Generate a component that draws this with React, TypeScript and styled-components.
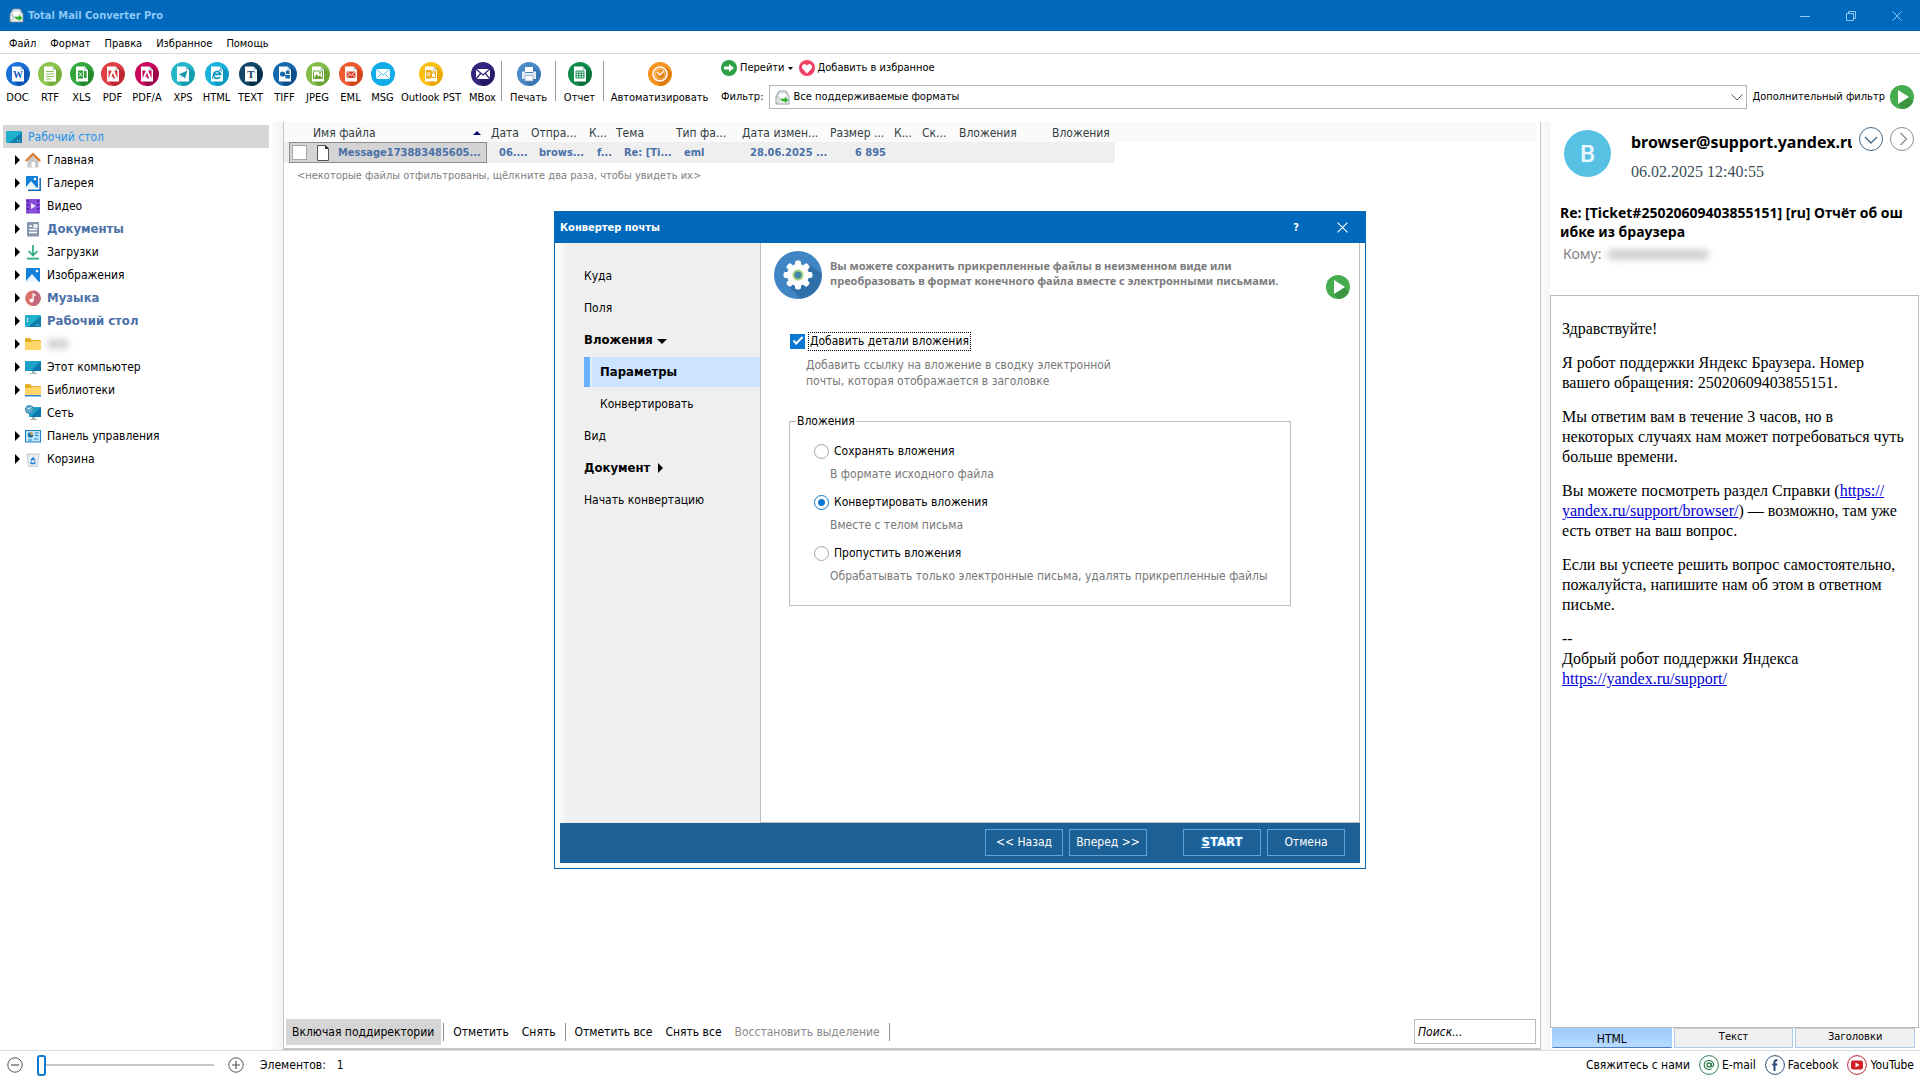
import React, { useState } from "react";
import styled, { createGlobalStyle, css } from "styled-components";

const ui = `"DejaVu Sans Condensed", "Noto Sans", sans-serif`;
const humanist = `"Noto Sans", "Open Sans", sans-serif`;
const serif = `"Liberation Serif", "Times New Roman", serif`;

const GlobalStyle = createGlobalStyle`
  *, *::before, *::after { box-sizing: border-box; }
  body { margin: 0; background: #fff; }
  button, input, select { font: inherit; color: inherit; margin: 0; }
  button { background: none; border: 0; padding: 0; }
`;

const Window = styled.div`
  display: flex;
  flex-direction: column;
  height: 100vh;
  overflow: hidden;
  font: 11px/16px ${ui};
  color: #000;
  background: #fff;
`;

/* ---------- title bar and menu ---------- */

const TitleBar = styled.header`
  display: flex;
  align-items: center;
  gap: 4px;
  flex: none;
  height: 31px;
  padding-left: 9px;
  background: #0069bb;
  color: #8cc8f8;
  font-weight: bold;
`;

const WindowButtons = styled.div`
  display: flex;
  margin-left: auto;
`;

const WindowButton = styled.button`
  display: grid;
  place-items: center;
  width: 46px;
  height: 31px;
`;

const MenuBar = styled.nav`
  display: flex;
  align-items: center;
  flex: none;
  gap: 14px;
  height: 23px;
  padding: 3px 0 0 9px;
  border-bottom: 1px solid #d9d9d9;
`;

/* ---------- toolbar ---------- */

const Toolbar = styled.div`
  display: flex;
  flex: none;
  height: 68px;
  padding-left: 1px;
`;

const ToolButton = styled.button<{ $width: number }>`
  display: flex;
  flex-direction: column;
  align-items: center;
  gap: 4px;
  flex: none;
  width: ${(p) => p.$width}px;
  padding-top: 8px;
  white-space: nowrap;
`;

const ToolSeparator = styled.span`
  flex: none;
  width: 1px;
  height: 40px;
  margin-top: 7px;
  background: #9a9a9a;
`;

const ToolColumn = styled.div`
  display: flex;
  flex-direction: column;
  flex: 1;
  gap: 7px;
  padding: 3px 6px 0;
`;

const ToolLine = styled.div<{ $gap: number }>`
  display: flex;
  align-items: center;
  gap: ${(p) => p.$gap}px;
  height: 22px;
`;

const LinkButton = styled.button`
  display: flex;
  align-items: center;
  gap: 3px;
  white-space: nowrap;
`;

const ComboBox = styled.div`
  display: flex;
  align-items: center;
  flex: 1;
  gap: 4px;
  height: 24px;
  padding: 0 3px 0 5px;
  border: 1px solid #b5b5b5;
`;

const BareSelect = styled.select`
  flex: 1;
  appearance: none;
  border: 0;
  background: none;
  padding: 0;
  outline: 0;
`;

/* ---------- folder tree ---------- */

const Main = styled.main`
  display: flex;
  flex: 1;
  min-height: 0;
`;

const Tree = styled.nav`
  flex: none;
  width: 272px;
  padding: 3px 3px 0;
  font-size: 12px;
`;

const TreeRow = styled.button<{ $root?: boolean; $bold?: boolean }>`
  display: flex;
  align-items: center;
  gap: 6px;
  width: 100%;
  height: 23px;
  padding-left: ${(p) => (p.$root ? 3 : 12)}px;
  white-space: nowrap;
  ${(p) => p.$root && css`background: #d6d6d6; color: #2492ee; border-radius: 1px;`}
  ${(p) => p.$bold && css`color: #4a70a8; font-size: 13px; font-weight: bold;`}
`;

const Caret = styled.span<{ $hidden?: boolean }>`
  width: 5px;
  border: 5px solid transparent;
  border-left-color: #000;
  border-right: 0;
  margin-right: -1px;
  visibility: ${(p) => (p.$hidden ? "hidden" : "visible")};
`;

const BlurredWord = styled.span<{ $width: number; $height: number }>`
  width: ${(p) => p.$width}px;
  height: ${(p) => p.$height}px;
  border-radius: 6px;
  background: #d2d2d2;
  filter: blur(3px);
`;

const Gutter = styled.div<{ $width: number }>`
  flex: none;
  width: ${(p) => p.$width}px;
  background: linear-gradient(90deg, #fafafa, #f4f4f4);
`;

/* ---------- file list ---------- */

const FilesPanel = styled.section`
  display: flex;
  flex-direction: column;
  flex: 1;
  min-width: 0;
  border: 1px solid #c4c4c4;
  border-top: 0;
  border-bottom-width: 2px;
`;

const HeaderStrip = styled.div`
  margin-right: 4px;
  background: linear-gradient(#fafafa, #fafafa) top / 100% 20px no-repeat;
`;

const FileTable = styled.table`
  table-layout: fixed;
  width: 831px;
  border-collapse: collapse;
  font-size: 12px;
  th {
    height: 20px;
    padding: 2px 0 0 4px;
    font-weight: normal;
    text-align: left;
    color: #333d42;
    white-space: nowrap;
  }
  td {
    height: 20px;
    padding: 0 0 0 12px;
    background: #efefef;
    color: #4a70a8;
    font-size: 11px;
    font-weight: bold;
    white-space: nowrap;
  }
  th:first-child { padding-left: 29px; }
  td:first-child { padding: 0 0 0 5px; }
`;

const NameHeader = styled.span`
  display: flex;
  align-items: center;
  justify-content: space-between;
  padding-right: 6px;
`;

const SortMark = styled.span`
  border: 4px solid transparent;
  border-bottom-color: #0b0b80;
  border-top: 0;
`;

const NameCell = styled.span`
  display: flex;
  align-items: center;
  height: 21px;
  padding-left: 2px;
  border: 1px solid #8b8b8b;
  background: #d4d4d4;
  svg { margin: 0 9px 0 10px; }
`;

const RowCheck = styled.input`
  appearance: none;
  flex: none;
  width: 15px;
  height: 15px;
  border: 1px solid #a5a5a5;
  background: #fff;
`;

const SizeCell = styled.td`
  && { padding: 0 4px 0 0; text-align: right; }
`;

const FilterNote = styled.p`
  margin: 0;
  padding: 5px 0 0 13px;
  color: #808080;
`;

const FilesFooter = styled.div`
  display: flex;
  align-items: center;
  margin-top: auto;
  height: 30px;
  padding: 0 4px 3px 2px;
  font-size: 12px;
`;

const FootButton = styled.button<{ $pressed?: boolean }>`
  height: 26px;
  padding: 0 7px 0 6px;
  white-space: nowrap;
  background: ${(p) => (p.$pressed ? "#d5d5d5" : "none")};
  &:disabled { color: #8a8a8a; }
`;

const FootSeparator = styled.span`
  width: 1px;
  height: 18px;
  margin: 0 3px 0 2px;
  background: #8e8e8e;
`;

const SearchInput = styled.input`
  width: 122px;
  height: 25px;
  margin-left: auto;
  padding: 0 3px;
  border: 1px solid #b9b9b9;
  outline: 0;
  font-size: 12px;
  font-style: italic;
  &::placeholder { color: #000; opacity: 1; }
`;

/* ---------- message preview ---------- */

const Preview = styled.aside`
  display: flex;
  flex-direction: column;
  flex: none;
  width: 370px;
  padding: 0 1px 2px 0;
`;

const Sender = styled.div`
  display: flex;
  align-items: flex-start;
  height: 76px;
  padding: 5px 5px 0 14px;
`;

const Avatar = styled.div`
  display: grid;
  place-items: center;
  flex: none;
  width: 47px;
  height: 47px;
  margin-top: 3px;
  border-radius: 50%;
  background: #57c1e4;
  color: #e9f8fd;
  font: 500 24px/46px Roboto, "Noto Sans", sans-serif;
`;

const SenderText = styled.div`
  flex: 1;
  min-width: 0;
  margin: 3px 7px 0 20px;
  overflow: hidden;
  white-space: nowrap;
`;

const Email = styled.div`
  font: bold 16px/24px ${humanist};
`;

const Stamp = styled.div`
  margin-top: 7px;
  font: 16px/22px ${serif};
  color: #3c4f58;
`;

const RoundButtons = styled.div`
  display: flex;
  gap: 7px;
`;

const Subject = styled.h2`
  margin: 0;
  padding: 5px 0 0 10px;
  font: bold 14px/19px ${humanist};
  white-space: nowrap;
`;

const Recipient = styled.div`
  display: flex;
  align-items: center;
  gap: 6px;
  height: 26px;
  padding-left: 13px;
  font: 14px/20px ${humanist};
  color: #848484;
`;

const Letter = styled.article`
  flex: 1;
  margin-top: 28px;
  padding: 23px 12px 0 11px;
  border: 1px solid #bcbcbc;
  font: 16px/20px ${serif};
  p { margin: 0 0 14px; }
  a { color: #0000d8; }
`;

const Tabs = styled.div`
  display: flex;
  gap: 2px;
  padding: 0 4px 0 2px;
`;

const Tab = styled.button<{ $active?: boolean }>`
  flex: 1;
  height: 20px;
  padding-bottom: 2px;
  border: 1px solid #aacdf0;
  border-top-color: #c9c9c9;
  background: #f0f0f0;
  ${(p) => p.$active && css`
    background: linear-gradient(#9fcbff, #b9dbff);
    border-color: #a8cffb;
    border-bottom-color: #4a7fc4;
    font-size: 12px;
    padding: 2px 0 0;
  `}
`;

/* ---------- status bar ---------- */

const StatusBar = styled.footer`
  display: flex;
  align-items: center;
  flex: none;
  height: 30px;
  padding: 0 6px 1px 7px;
  border-top: 1px solid #d5dde5;
  font-size: 12px;
`;

const Zoom = styled.div`
  display: flex;
  align-items: center;
  gap: 14px;
  margin-right: 16px;
`;

const ZoomRange = styled.input`
  appearance: none;
  width: 177px;
  height: 22px;
  background: linear-gradient(#c6c6c6, #c6c6c6) center / 100% 2px no-repeat;
  &::-webkit-slider-thumb {
    appearance: none;
    width: 9px;
    height: 21px;
    border: 2px solid #0a7ad1;
    border-radius: 3px;
    background: #fff;
  }
`;

const ZoomButton = styled.button`
  display: flex;
`;

const Count = styled.span`
  margin-left: 11px;
`;

const Contacts = styled.div`
  display: flex;
  align-items: center;
  gap: 9px;
  margin-left: auto;
`;

const Social = styled.a`
  display: flex;
  align-items: center;
  gap: 3px;
  color: #000;
  text-decoration: none;
`;

/* ---------- converter dialog ---------- */

const Overlay = styled.div`
  position: fixed;
  inset: 0;
  display: grid;
  place-items: center;
`;

const Dialog = styled.section`
  display: flex;
  flex-direction: column;
  width: 812px;
  height: 658px;
  border: 1px solid #0a69b4;
  background: #fff;
`;

const DialogTitle = styled.header`
  display: flex;
  align-items: center;
  flex: none;
  height: 31px;
  padding-left: 5px;
  background: #0069bb;
  color: #fff;
  font-weight: bold;
`;

const DialogFrame = styled.div`
  display: flex;
  flex-direction: column;
  flex: 1;
  margin: 0 5px 5px;
`;

const DialogMain = styled.div`
  display: flex;
  flex: 1;
`;

const Steps = styled.nav`
  display: flex;
  flex-direction: column;
  width: 200px;
  padding: 17px 0 0 24px;
  background: linear-gradient(90deg, #fafafa, #efefef 8px);
  font-size: 12px;
`;

const Step = styled.button<{ $bold?: boolean; $child?: boolean; $active?: boolean }>`
  display: flex;
  align-items: center;
  gap: 4px;
  height: 30px;
  margin: 1px 0;
  padding-left: ${(p) => (p.$child ? 16 : 0)}px;
  ${(p) => p.$bold && css`font-size: 13px; font-weight: bold;`}
  ${(p) => p.$active && css`
    background: linear-gradient(90deg, #6ab2fb 6px, #e2effc 6px, #e2effc 8px, #cce4ff 8px);
  `}
`;

const Arrow = styled.span<{ $down?: boolean }>`
  border: 5px solid transparent;
  ${(p) =>
    p.$down
      ? css`border-top-color: #000; border-bottom: 0; margin-top: 3px;`
      : css`border-left-color: #000; border-right: 0; margin-left: 4px;`}
`;

const StepPage = styled.div`
  flex: 1;
  padding: 8px 9px 0 13px;
  border: 1px solid #bdbdbd;
  border-top: 0;
  font-size: 12px;
`;

const Intro = styled.div`
  display: flex;
  align-items: flex-start;
  gap: 8px;
  p {
    flex: 1;
    margin: 7px 0 0;
    color: #7d7d7d;
    font: bold 11px/15px ${humanist};
    white-space: nowrap;
  }
  button { margin-top: 24px; }
`;

const Options = styled.div`
  padding: 29px 59px 0 16px;
`;

const CheckLabel = styled.label`
  display: flex;
  align-items: center;
  gap: 4px;
  width: max-content;
  height: 18px;
  margin-bottom: 7px;
  span { height: 17px; padding: 0 1px; outline: 1px dotted #000; }
`;

const CheckInput = styled.input`
  appearance: none;
  width: 15px;
  height: 15px;
  background: #0a78d0;
  display: grid;
  place-items: center;
  &::after {
    content: "";
    width: 10px;
    height: 5px;
    margin-top: -3px;
    border: solid #fff;
    border-width: 0 0 2px 2px;
    rotate: -45deg;
    visibility: hidden;
  }
  &:checked::after { visibility: visible; }
`;

const Hint = styled.p`
  margin: 0;
  padding-left: 16px;
  color: #777;
`;

const Group = styled.fieldset`
  height: 193px;
  min-width: 0;
  margin: 24px 0 0 -1px;
  padding: 14px 0 0 24px;
  border: 1px solid #bdbdbd;
  white-space: nowrap;
  legend { margin-left: -18px; padding: 0 1px; }
`;

const RadioLabel = styled.label`
  display: flex;
  align-items: center;
  gap: 5px;
  height: 16px;
`;

const RadioInput = styled.input`
  appearance: none;
  width: 15px;
  height: 15px;
  border: 1px solid #a3a3a3;
  border-radius: 50%;
  background: #fff;
  &:checked {
    border-color: #0a78d0;
    background: radial-gradient(#0a78d0 3px, #fff 4px);
  }
`;

const RadioItem = styled.div`
  height: 51px;
  p { margin-top: 7px; }
`;

const DialogFooter = styled.footer`
  display: flex;
  align-items: center;
  justify-content: flex-end;
  gap: 6px;
  height: 40px;
  padding: 0 15px 2px 0;
  background: #1d6096;
  color: #fff;
  font-size: 12px;
`;

const FooterButton = styled.button<{ $start?: boolean }>`
  width: 78px;
  height: 27px;
  border: 1px solid #5fa4dd;
  white-space: nowrap;
  ${(p) => p.$start && css`
    margin-left: 30px;
    font-size: 13px;
    font-weight: bold;
    text-shadow: 0 0 3px #2a9bff;
    &::first-letter { text-decoration: underline; }
  `}
`;

/* ---------- icons ---------- */

const Disc = ({ fill, shade, children }: { fill: string; shade?: string; children?: React.ReactNode }) => (
  <svg width="24" height="24" viewBox="0 0 24 24">
    <circle cx="12" cy="12" r="12" fill={fill} />
    {shade && <path d="M17 5 L23.2 9.5 A12 12 0 0 1 12 24 L8 19 Z" fill={shade} />}
    {children}
  </svg>
);

const Sheet = ({ children }: { children?: React.ReactNode }) => (
  <>
    <path d="M6 4.5h8.5L18 8v11.5H6z" fill="#fff" />
    <path d="M14.5 4.5V8H18z" fill="#b9cfdc" />
    {children}
  </>
);

const AdobeMark = ({ color }: { color: string }) => (
  <path d="M7.500 16.500V8.500h3.200zM16.500 16.500V8.500h-3.200zM12 11l2.300 5.500h-1.700l-.7-1.700h-1.600z" fill={color} />
);

const glyphs: Record<string, React.ReactNode> = {
  DOC: <Disc fill="#1b6fd8" shade="#0d54b4"><Sheet><text x="12" y="16" fontSize="10" fontWeight="bold" textAnchor="middle" fill="#1159b8" fontFamily="Liberation Serif, serif">W</text></Sheet></Disc>,
  RTF: <Disc fill="#8cc34e" shade="#76ad3b"><Sheet><path d="M8 9.5h8M8 12h8M8 14.500h8M8 17h5" stroke="#8cc34e" strokeWidth="1.2" /></Sheet></Disc>,
  XLS: <Disc fill="#35a83c" shade="#23892b"><Sheet><path d="M8 8.500h5v8H8zM14 9h2.500v7H14" fill="#2a9a34" /><path d="M9 10.500l3 4M12 10.500l-3 4" stroke="#fff" /></Sheet></Disc>,
  PDF: <Disc fill="#dd3f45" shade="#bd2830"><Sheet><AdobeMark color="#d5343b" /></Sheet></Disc>,
  "PDF/A": <Disc fill="#c8085c" shade="#9b0648"><Sheet><AdobeMark color="#c0085a" /></Sheet></Disc>,
  XPS: <Disc fill="#25b7c9" shade="#159bad"><Sheet><path d="M7.500 12.500 16.500 8.500 14 16.500 11.500 14 10.500 16V13.500z" fill="#1799ab" /></Sheet></Disc>,
  HTML: <Disc fill="#17b3dd" shade="#0b97be"><Sheet><path d="M15 15a3.500 3.500 0 1 1 .600-2.600H9" fill="none" stroke="#0a93bd" strokeWidth="1.700" /><path d="M8 17q-1.500-.500 0-3.500M14 8.500q3-1.500 2.500 1" fill="none" stroke="#0a93bd" strokeWidth=".9" /></Sheet></Disc>,
  TEXT: <Disc fill="#12466b" shade="#082d49"><Sheet><text x="12" y="16" fontSize="11" fontWeight="bold" textAnchor="middle" fill="#12395a" fontFamily="Liberation Serif, serif">T</text></Sheet></Disc>,
  TIFF: <Disc fill="#1668ac" shade="#0e4f89"><Sheet><circle cx="9.500" cy="12" r="2.600" fill="#1668ac" /><path d="M9 12 14 14" stroke="#1668ac" strokeWidth="1.500" /><path d="M13 8.500h3.500V12H13zM12.500 13H17v3.500h-4.500z" fill="#1668ac" /></Sheet></Disc>,
  JPEG: <Disc fill="#85bd4b" shade="#6ca337"><Sheet><path d="M7.500 9h9v7.500h-9z" fill="none" stroke="#6ba537" /><path d="M8 16l2.500-4 2 2.500 1.500-1.500 2 3z" fill="#6ba537" /><circle cx="14" cy="11" r="1" fill="#6ba537" /></Sheet></Disc>,
  EML: <Disc fill="#ee5a2f" shade="#d0451e"><Sheet><path d="M7.500 9.500h9v6.500h-9z" fill="#d9452a" /><path d="M7.500 9.500 12 13.500l4.500-4M7.500 16l3-3.500M16.500 16l-3-3.500" stroke="#fff" fill="none" strokeWidth=".8" /></Sheet></Disc>,
  MSG: <Disc fill="#10ace8"><path d="M5 7h14v10H5z" fill="#fff" /><path d="M5 7l7 6 7-6M5 17l5-5M19 17l-5-5" stroke="#58c6ef" fill="none" /></Disc>,
  "Outlook PST": <Disc fill="#fbbf14" shade="#e8a806"><Sheet><path d="M7 8h5v8.500H7z" fill="#f0a90c" /><circle cx="9.500" cy="12.200" r="1.500" stroke="#fff" fill="none" /><path d="M12.500 9h4v6.500h-4zM12.500 9.500l2 2.500 2-2.500" fill="none" stroke="#f0a90c" /></Sheet></Disc>,
  MBox: <Disc fill="#33267f" shade="#241966"><path d="M5 7h14v10H5z" fill="#fff" /><path d="M5 7l7 6 7-6M5 17l5-6M19 17l-5-6" stroke="#33267f" strokeWidth="1.300" fill="none" /></Disc>,
  "Печать": <Disc fill="#4889c6" shade="#3876b2"><path d="M8 5h8v5H8z" fill="#fff" /><path d="M5 9.500h3V11h8V9.500h3V17H5z" fill="#dfe9f2" /><path d="M8 13.500h8V19H8z" fill="#fff" stroke="#8fa9c0" strokeWidth=".8" /></Disc>,
  "Отчет": <Disc fill="#0f8b4c" shade="#0a6f3b"><Sheet><path d="M8 9h8v7H8zM8 11.300h8M8 13.700h8M10.700 9v7M13.300 9v7" fill="none" stroke="#0f8b4c" strokeWidth=".9" /></Sheet></Disc>,
  "Автоматизировать": <Disc fill="#f6921e" shade="#dd7b0c"><circle cx="12" cy="12" r="7" fill="none" stroke="#fff" strokeWidth="1.600" /><circle cx="12" cy="12" r="5" fill="none" stroke="#fde0bd" strokeWidth=".7" /><path d="M9 10l3 3 4-4" stroke="#fff" strokeWidth="1.400" fill="none" /></Disc>,
};

const PlayIcon = () => (
  <svg width="24" height="24" viewBox="0 0 24 24">
    <circle cx="12" cy="12" r="12" fill="#45ad4d" />
    <path d="M19 12 22.800 17A12 12 0 0 1 12 24L8 19z" fill="#3a9440" />
    <path d="M8 5l11 7-11 7z" fill="#fff" />
  </svg>
);

const GearIcon = () => (
  <svg width="48" height="48" viewBox="0 0 48 48">
    <circle cx="24" cy="24" r="24" fill="#4085c4" />
    <path d="M34 13 L47.500 22 A24 24 0 0 1 27 47.700 L14 35 Z" fill="#2f70ab" />
    <g fill="#fff">
      {[0, 45, 90, 135].map((a) => (
        <rect key={a} x="21" y="9.500" width="6" height="29" rx="2" transform={`rotate(${a} 24 24)`} />
      ))}
      <circle cx="24" cy="24" r="11" />
    </g>
    <circle cx="24" cy="24" r="4.500" fill="#3f86a8" stroke="#a5cf7c" strokeWidth="2" />
  </svg>
);

const MailIcon = () => (
  <svg width="15" height="15" viewBox="0 0 15 15">
    <path d="M1 6 4 1h7l3 5v8H1z" fill="#eef3ee" stroke="#7d8795" strokeWidth=".8" />
    <path d="M3.500 3h8v5l-4 2.500-4-2.500z" fill="#fff" stroke="#9aa6b5" strokeWidth=".5" />
    <path d="M1 14l5-5M1 6l5 4" stroke="#8d97a3" strokeWidth=".7" />
    <path d="M5 8.500h4.500V6.500l4.500 3.500-4.500 3.500v-2H7z" fill="#2fae2b" stroke="#fff" strokeWidth=".4" />
  </svg>
);

const FolderShape = ({ base }: { base?: string }) => (
  <>
    <path d="M0 3q0-1 1-1h4l2 2h8q1 0 1 1v3H0z" fill="#e5ae2b" />
    <path d="M0 6h6l1.500-1H15q1 0 1 1v8H0z" fill="#ffd667" />
    {base && <path d="M0 13h16v1.500H0z" fill={base} />}
  </>
);

const Monitor = ({ left = 0 }: { left?: number }) => (
  <>
    <path d={`M${left} 2h${16 - left}v10H${left}z`} fill="#1ba0c8" />
    <path d="M16 2v10H6z" fill="#0f76ae" />
    <path d="M7 12h3v2h2v1H5v-1h2z" fill="#a9b3ba" />
  </>
);

const DesktopShape = () => (
  <>
    <rect y="2" width="16" height="12" rx="1" fill="#20b0cb" />
    <path d="M16 3v10q0 1-1 1H3z" fill="#117fae" />
    <path d="M11 12h4" stroke="#bfe6f5" strokeWidth="1" strokeDasharray="1 1" />
  </>
);

const Picture = ({ size }: { size: number }) => (
  <>
    <rect x="1" y="1" width={size} height={size} rx="1" fill="#1280d8" />
    <path d={`M1 ${size} L${size / 2} ${size / 2} L${size} ${size + 1} H1z`} fill="#e9f5ff" />
    <circle cx={size - 2} cy="4" r="1.300" fill="#fff" />
  </>
);

const treeArt: Record<string, React.ReactNode> = {
  root: <DesktopShape />,
  home: <><path d="M2.500 8 8 3l5.500 5v7.500h-11z" fill="#c9c9c9" /><path d="M6.500 10h3.500v5.500H6.500z" fill="#fff" /><path d="M.800 9 8 2l7.200 7" fill="none" stroke="#e07b28" strokeWidth="2.200" /></>,
  gallery: <><path d="M3 15.200h12.200V3" fill="none" stroke="#1167b4" strokeWidth="1.500" /><Picture size={12} /></>,
  video: <><rect x="1" y="1" width="14" height="14.500" fill="#8a4ddb" /><path d="M3 2v13M13 2v13" stroke="#4c2394" strokeWidth="1.800" strokeDasharray="2 2" /><path d="M6 5l5 3-5 3z" fill="#efe3ff" /></>,
  docs: <><rect x="2" y="1" width="12" height="14.500" rx="1" fill="#8494ab" /><path d="M4 5h3M9 4h3v2H9zM4 8.500h8M4 11.500h8" stroke="#fff" strokeWidth="1.300" fill="none" /></>,
  down: <path d="M8 1v10M3.500 7 8 11.500 12.500 7M2 14.700h12" fill="none" stroke="#27aa85" strokeWidth="1.700" />,
  images: <Picture size={14} />,
  music: <><circle cx="8" cy="8.200" r="7.800" fill="#d9716a" /><path d="M8 0.400a7.800 7.800 0 0 1 0 15.600z" fill="#c3687c" /><circle cx="6.500" cy="10.500" r="2" fill="#fff" /><path d="M8.200 10.500V4l2.500 1.500" stroke="#fff" strokeWidth="1.300" fill="none" /></>,
  desktop: <><DesktopShape /><path d="M2.500 5v4" stroke="#fff" strokeWidth="1.300" strokeDasharray="1.500 1" /></>,
  folder: <FolderShape />,
  pc: <Monitor />,
  libs: <FolderShape base="#2f86d2" />,
  net: <><Monitor left={4} /><circle cx="4.500" cy="4.500" r="4" fill="#5fa9c9" stroke="#3b87ab" /><path d="M2 3q3 2 4.500-1" stroke="#d8f0fa" fill="none" /></>,
  panel: <><rect x=".500" y="2.500" width="15" height="11.500" fill="#bfe4fb" stroke="#1e83c6" /><circle cx="5.500" cy="7" r="2.700" fill="#1d6fae" /><path d="M5.500 7V4.300A2.700 2.700 0 0 1 8.200 7z" fill="#f0a42b" /><path d="M10 5h3.500M10 7.500h3.500M3 12h4M9 11h4" stroke="#1e83c6" /></>,
  bin: <><path d="M2 3h12l-1.500 12.500h-9z" fill="#e8edf1" stroke="#b8c1c9" strokeWidth=".8" /><path d="M6 9.500 8 7l2 2.500M10.500 11 9 12.500H6.500L5.500 11" stroke="#1e7fd4" strokeWidth="1.500" fill="none" /></>,
};

const TreeIcon = ({ name }: { name: string }) => (
  <svg width="16" height="16" viewBox="0 0 16 16">{treeArt[name]}</svg>
);

const CrossIcon = ({ size }: { size: number }) => (
  <svg width={size} height={size} viewBox="0 0 10 10">
    <path d="M.500.500l9 9M9.500.500l-9 9" stroke="currentColor" strokeWidth="1" />
  </svg>
);

const RoundChevron = ({ color, d }: { color: string; d: string }) => (
  <svg width="24" height="24" viewBox="0 0 24 24" fill="none" stroke={color}>
    <circle cx="12" cy="12" r="11.500" />
    <path d={d} strokeWidth="1.300" />
  </svg>
);

const ZoomIcon = ({ plus }: { plus?: boolean }) => (
  <svg width="16" height="16" viewBox="0 0 16 16" fill="none" stroke="#555">
    <circle cx="8" cy="8" r="7.200" />
    <path d={plus ? "M4 8h8M8 4v8" : "M4 8h8"} strokeWidth="1.200" />
  </svg>
);

const SocialRing = ({ color, children }: { color: string; children: React.ReactNode }) => (
  <svg width="20" height="20" viewBox="0 0 20 20">
    <circle cx="10" cy="10" r="9.400" fill="#fff" stroke={color} />
    {children}
  </svg>
);

/* ---------- data ---------- */

const exportTools: [string, number][] = [
  ["DOC", 33], ["RTF", 32], ["XLS", 31], ["PDF", 31], ["PDF/A", 38], ["XPS", 34], ["HTML", 33],
  ["TEXT", 35], ["TIFF", 33], ["JPEG", 33], ["EML", 33], ["MSG", 31], ["Outlook PST", 66], ["MBox", 37],
];
const otherTools: [string, number][] = [["Печать", 53], ["Отчет", 47], ["Автоматизировать", 111]];

const folders = [
  { icon: "home", label: "Главная" },
  { icon: "gallery", label: "Галерея" },
  { icon: "video", label: "Видео" },
  { icon: "docs", label: "Документы", bold: true },
  { icon: "down", label: "Загрузки" },
  { icon: "images", label: "Изображения" },
  { icon: "music", label: "Музыка", bold: true },
  { icon: "desktop", label: "Рабочий стол", bold: true },
  { icon: "folder", label: "" },
  { icon: "pc", label: "Этот компьютер" },
  { icon: "libs", label: "Библиотеки" },
  { icon: "net", label: "Сеть", leaf: true },
  { icon: "panel", label: "Панель управления" },
  { icon: "bin", label: "Корзина" },
];

const columns: [string, number][] = [
  ["Имя файла", 203], ["Дата", 40], ["Отпра...", 58], ["К...", 27], ["Тема", 60], ["Тип фа...", 66],
  ["Дата измен...", 88], ["Размер ...", 64], ["К...", 28], ["Ск...", 37], ["Вложения", 93], ["Вложения", 67],
];

const modes = [
  ["Сохранять вложения", "В формате исходного файла"],
  ["Конвертировать вложения", "Вместе с телом письма"],
  ["Пропустить вложения", "Обрабатывать только электронные письма, удалять прикрепленные файлы"],
];

const ConverterDialog = () => {
  const [mode, setMode] = useState(1);
  const [details, setDetails] = useState(true);
  return (
    <Overlay>
      <Dialog role="dialog" aria-label="Конвертер почты">
        <DialogTitle>
          Конвертер почты
          <WindowButtons>
            <WindowButton aria-label="Справка">?</WindowButton>
            <WindowButton aria-label="Закрыть"><CrossIcon size={11} /></WindowButton>
          </WindowButtons>
        </DialogTitle>
        <DialogFrame>
          <DialogMain>
            <Steps>
              <Step>Куда</Step>
              <Step>Поля</Step>
              <Step $bold>Вложения<Arrow $down /></Step>
              <Step $bold $child $active>Параметры</Step>
              <Step $child>Конвертировать</Step>
              <Step>Вид</Step>
              <Step $bold>Документ<Arrow /></Step>
              <Step>Начать конвертацию</Step>
            </Steps>
            <StepPage>
              <Intro>
                <GearIcon />
                <p>
                  Вы можете сохранить прикрепленные файлы в неизменном виде или
                  <br />
                  преобразовать в формат конечного файла вместе с электронными письмами.
                </p>
                <button aria-label="Запустить"><PlayIcon /></button>
              </Intro>
              <Options>
                <CheckLabel>
                  <CheckInput type="checkbox" checked={details} onChange={() => setDetails(!details)} />
                  <span>Добавить детали вложения</span>
                </CheckLabel>
                <Hint>
                  Добавить ссылку на вложение в сводку электронной
                  <br />
                  почты, которая отображается в заголовке
                </Hint>
                <Group>
                  <legend>Вложения</legend>
                  {modes.map(([label, hint], i) => (
                    <RadioItem key={label}>
                      <RadioLabel>
                        <RadioInput type="radio" name="mode" checked={mode === i} onChange={() => setMode(i)} />
                        {label}
                      </RadioLabel>
                      <Hint>{hint}</Hint>
                    </RadioItem>
                  ))}
                </Group>
              </Options>
            </StepPage>
          </DialogMain>
          <DialogFooter>
            <FooterButton>&lt;&lt; Назад</FooterButton>
            <FooterButton>Вперед &gt;&gt;</FooterButton>
            <FooterButton $start>START</FooterButton>
            <FooterButton>Отмена</FooterButton>
          </DialogFooter>
        </DialogFrame>
      </Dialog>
    </Overlay>
  );
};

const Tool = ({ name, width }: { name: string; width: number }) => (
  <ToolButton $width={width}>
    {glyphs[name]}
    {name}
  </ToolButton>
);

export default function App() {
  return (
    <Window>
      <GlobalStyle />
      <TitleBar>
        <MailIcon />
        Total Mail Converter Pro
        <WindowButtons>
          <WindowButton aria-label="Свернуть">
            <svg width="10" height="10"><path d="M0 5.500h10" stroke="currentColor" /></svg>
          </WindowButton>
          <WindowButton aria-label="Развернуть">
            <svg width="10" height="10" fill="none" stroke="currentColor"><path d="M.500 2.500h7v7h-7zM2.500 2V.500h7v7H8" /></svg>
          </WindowButton>
          <WindowButton aria-label="Закрыть"><CrossIcon size={10} /></WindowButton>
        </WindowButtons>
      </TitleBar>
      <MenuBar>
        {["Файл", "Формат", "Правка", "Избранное", "Помощь"].map((m) => <button key={m}>{m}</button>)}
      </MenuBar>

      <Toolbar>
        {exportTools.map(([name, width]) => <Tool key={name} name={name} width={width} />)}
        {otherTools.map(([name, width]) => (
          <React.Fragment key={name}>
            <ToolSeparator />
            <Tool name={name} width={width} />
          </React.Fragment>
        ))}
        <ToolColumn>
          <ToolLine $gap={6}>
            <LinkButton>
              <svg width="16" height="16" viewBox="0 0 16 16">
                <circle cx="8" cy="8" r="8" fill="#2e9f45" />
                <path d="M3 6.500h5V4l5 4-5 4V9.500H3z" fill="#fff" />
              </svg>
              Перейти
              <svg width="5" height="3"><path d="M0 0h5L2.500 3z" /></svg>
            </LinkButton>
            <LinkButton>
              <svg width="16" height="16" viewBox="0 0 16 16">
                <circle cx="8" cy="8" r="8" fill="#ee4163" />
                <path d="M8 13.500 3.300 8.500C1.500 5 6 2.500 8 5.500 10 2.500 14.500 5 12.700 8.500z" fill="#fff" />
              </svg>
              Добавить в избранное
            </LinkButton>
          </ToolLine>
          <ToolLine $gap={5}>
            <label htmlFor="filter">Фильтр:</label>
            <ComboBox>
              <MailIcon />
              <BareSelect id="filter"><option>Все поддерживаемые форматы</option></BareSelect>
              <svg width="12" height="7" viewBox="0 0 12 7"><path d="M.500.500 6 6l5.500-5.500" fill="none" stroke="#555" /></svg>
            </ComboBox>
            <LinkButton>Дополнительный фильтр</LinkButton>
            <LinkButton aria-label="Применить фильтр"><PlayIcon /></LinkButton>
          </ToolLine>
        </ToolColumn>
      </Toolbar>

      <Main>
        <Tree>
          <TreeRow $root><TreeIcon name="root" />Рабочий стол</TreeRow>
          {folders.map((f) => (
            <TreeRow key={f.icon} $bold={f.bold}>
              <Caret $hidden={f.leaf} />
              <TreeIcon name={f.icon} />
              {f.label || <BlurredWord $width={22} $height={10} />}
            </TreeRow>
          ))}
        </Tree>
        <Gutter $width={11} />

        <FilesPanel>
          <HeaderStrip>
            <FileTable>
              <colgroup>{columns.map(([, w], i) => <col key={i} style={{ width: w }} />)}</colgroup>
              <thead>
                <tr>
                  {columns.map(([label], i) => (
                    <th key={i}>{i ? label : <NameHeader>{label}<SortMark /></NameHeader>}</th>
                  ))}
                </tr>
              </thead>
              <tbody>
                <tr>
                  <td>
                    <NameCell>
                      <RowCheck type="checkbox" aria-label="Выбрать файл" />
                      <svg width="12" height="16" viewBox="0 0 12 16">
                        <path d="M.500.500h8l3 3v12H.500z" fill="#fff" stroke="#555" />
                        <path d="M8.500.500v3h3" fill="#222" stroke="#333" />
                      </svg>
                      Message173883485605...
                    </NameCell>
                  </td>
                  <td>06....</td>
                  <td>brows...</td>
                  <td>f...</td>
                  <td>Re: [Ti...</td>
                  <td>eml</td>
                  <td>28.06.2025 ...</td>
                  <SizeCell>6 895</SizeCell>
                  <td /><td /><td /><td />
                </tr>
              </tbody>
            </FileTable>
          </HeaderStrip>
          <FilterNote>&lt;некоторые файлы отфильтрованы, щёлкните два раза, чтобы увидеть их&gt;</FilterNote>
          <FilesFooter>
            <FootButton $pressed>Включая поддиректории</FootButton>
            <FootSeparator />
            <FootButton>Отметить</FootButton>
            <FootButton>Снять</FootButton>
            <FootSeparator />
            <FootButton>Отметить все</FootButton>
            <FootButton>Снять все</FootButton>
            <FootButton disabled>Восстановить выделение</FootButton>
            <FootSeparator />
            <SearchInput placeholder="Поиск..." aria-label="Поиск" />
          </FilesFooter>
        </FilesPanel>

        <Gutter $width={9} />
        <Preview>
          <Sender>
            <Avatar>B</Avatar>
            <SenderText>
              <Email>browser@support.yandex.ru</Email>
              <Stamp>06.02.2025 12:40:55</Stamp>
            </SenderText>
            <RoundButtons>
              <button aria-label="Развернуть"><RoundChevron color="#3f6684" d="M6 10l6 6 6-6" /></button>
              <button aria-label="Далее"><RoundChevron color="#8c8c8c" d="M10.500 6l6 6-6 6" /></button>
            </RoundButtons>
          </Sender>
          <Subject>
            Re: [Ticket#25020609403855151] [ru] Отчёт об ош
            <br />
            ибке из браузера
          </Subject>
          <Recipient>Кому: <BlurredWord $width={102} $height={11} /></Recipient>
          <Letter>
            <p>Здравствуйте!</p>
            <p>Я робот поддержки Яндекс Браузера. Номер вашего обращения: 25020609403855151.</p>
            <p>Мы ответим вам в течение 3 часов, но в некоторых случаях нам может потребоваться чуть больше времени.</p>
            <p>
              Вы можете посмотреть раздел Справки (
              <a href="#browser">https://<wbr />yandex.ru/support/browser/</a>) — возможно, там уже есть ответ на ваш вопрос.
            </p>
            <p>Если вы успеете решить вопрос самостоятельно, пожалуйста, напишите нам об этом в ответном письме.</p>
            <p>
              --
              <br />
              Добрый робот поддержки Яндекса
              <br />
              <a href="#support">https://yandex.ru/support/</a>
            </p>
          </Letter>
          <Tabs>
            <Tab $active>HTML</Tab>
            <Tab>Текст</Tab>
            <Tab>Заголовки</Tab>
          </Tabs>
        </Preview>
      </Main>

      <StatusBar>
        <Zoom>
          <ZoomButton aria-label="Уменьшить"><ZoomIcon /></ZoomButton>
          <ZoomRange type="range" min="0" max="100" defaultValue="0" aria-label="Масштаб" />
          <ZoomButton aria-label="Увеличить"><ZoomIcon plus /></ZoomButton>
        </Zoom>
        Элементов: <Count>1</Count>
        <Contacts>
          Свяжитесь с нами
          <Social href="#mail">
            <SocialRing color="#2e7d4f">
              <circle cx="10" cy="10" r="2" fill="none" stroke="#2e7d4f" strokeWidth="1.300" />
              <path d="M12.200 8v3q.800 1.500 2 .300.800-1.500 0-3.300-1.800-3-5-2.500-4 1-4 4.500.500 4 4 4.500 2 .200 3.500-.700" fill="none" stroke="#2e7d4f" strokeWidth="1.200" />
            </SocialRing>
            E-mail
          </Social>
          <Social href="#facebook">
            <SocialRing color="#2f4a78">
              <path d="M12.500 5.200h-1.200q-1.800 0-1.800 2V16M7.300 9.500h5" fill="none" stroke="#2f4a78" strokeWidth="2" />
            </SocialRing>
            Facebook
          </Social>
          <Social href="#youtube">
            <SocialRing color="#b3262b">
              <rect x="4" y="5.500" width="12" height="9" rx="2" fill="#d01f26" />
              <path d="M8.500 7.500 12.500 10l-4 2.500z" fill="#fff" />
            </SocialRing>
            YouTube
          </Social>
        </Contacts>
      </StatusBar>
      <ConverterDialog />
    </Window>
  );
}
